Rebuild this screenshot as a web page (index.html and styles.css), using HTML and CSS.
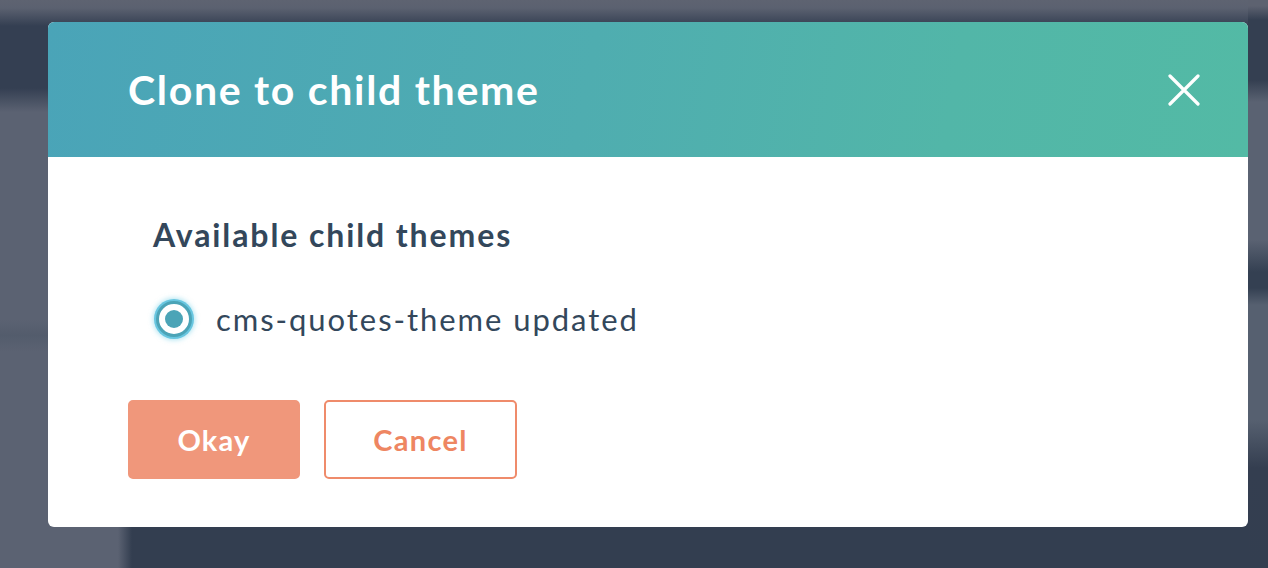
FILE: index.html
```html
<!DOCTYPE html>
<html lang="en">
<head>
<meta charset="utf-8">
<title>Clone to child theme</title>
<link rel="stylesheet" href="styles.css">
</head>
<body>
<div class="modal" role="dialog" aria-labelledby="modal-title">
  <header class="modal-header">
    <h1 class="modal-title" id="modal-title">Clone to child theme</h1>
    <button class="close-btn" type="button" aria-label="Close">
      <svg viewBox="0 0 32 32" width="32" height="32" aria-hidden="true">
        <path d="M2 2 L30 30 M30 2 L2 30" stroke="#fff" stroke-width="3.2" stroke-linecap="round" fill="none"/>
      </svg>
    </button>
  </header>
  <div class="modal-body">
    <fieldset class="field">
      <legend class="field-label">Available child themes</legend>
      <label class="radio-row">
        <span class="radio"><span class="radio-dot"></span></span>
        <span class="radio-text">cms-quotes-theme updated</span>
      </label>
    </fieldset>
    <div class="actions">
      <button class="btn btn-primary" type="button">Okay</button>
      <button class="btn btn-secondary" type="button">Cancel</button>
    </div>
  </div>
</div>
</body>
</html>
```
FILE: styles.css
```css
html, body {
  margin: 0;
  padding: 0;
}
body {
  width: 1268px;
  height: 568px;
  overflow: hidden;
  font-family: "Lato", "Open Sans", sans-serif;
  background-color: #5b6272;
  background-image:
    linear-gradient(to bottom, #5d6270 0, #5d6270 6px, #343f51 20px, #343f51 80px, #5a6272 102px, #5a6272 240px, #344052 272px, #344052 288px, #566070 305px, #566070 420px, #343e50 468px, #333e50 100%),
    linear-gradient(to right, #5b6272 0, #333e50 14px, #333e50 100%),
    linear-gradient(to bottom, #5e6371 0, #5b6170 8px, #343f52 26px, #343f52 88px, #5b6272 112px, #5b6272 320px, #535c6c 335px, #5b6272 352px, #5b6272 100%);
  background-repeat: no-repeat;
  background-size: 20px 100%, 1130px 128px, 100% 100%;
  background-position: right top, 118px 440px, left top;
  padding-top: 22px;
  box-sizing: border-box;
}

.modal {
  width: 1200px;
  height: 505px;
  margin-left: 48px;
  background: #fff;
  border-radius: 6px;
  overflow: hidden;
  display: flex;
  flex-direction: column;
}

.modal-header {
  height: 135px;
  flex: none;
  display: flex;
  align-items: center;
  justify-content: space-between;
  padding: 0 46px 0 80px;
  background: linear-gradient(100deg, #4aa4b8 0%, #4fadb0 45%, #52b6a8 75%, #53baa5 100%);
}

.modal-title {
  margin: 0;
  color: #fff;
  font-size: 41px;
  font-weight: 700;
  letter-spacing: 1.7px;
  line-height: 1;
}

.close-btn {
  width: 36px;
  height: 36px;
  padding: 0;
  border: 0;
  background: transparent;
  display: flex;
  align-items: center;
  justify-content: center;
  cursor: pointer;
}
.close-btn svg {
  width: 32px;
  height: 32px;
}

.modal-body {
  padding: 62px 80px 0 80px;
  display: flex;
  flex-direction: column;
}

.field {
  margin: 0;
  padding: 0 0 0 25px;
  border: 0;
}

.field-label {
  padding: 0;
  color: #33475b;
  font-size: 32px;
  font-weight: 700;
  letter-spacing: 1.9px;
  line-height: 1;
}

.radio-row {
  display: flex;
  align-items: center;
  gap: 24px;
  margin-top: 44px;
  height: 48px;
}

.radio {
  width: 36px;
  height: 36px;
  box-sizing: border-box;
  border-radius: 50%;
  border: 3px solid #4ba4b7;
  background: #fff;
  box-shadow: 0 0 0 2px #68c6e0, 0 0 5px 3px rgba(110, 205, 230, 0.55);
  display: flex;
  align-items: center;
  justify-content: center;
  flex: none;
  margin-left: 3px;
}
.radio-dot {
  width: 18px;
  height: 18px;
  border-radius: 50%;
  background: #4ba4b7;
}

.radio-text {
  color: #33475b;
  font-size: 31px;
  font-weight: 400;
  letter-spacing: 1.95px;
  line-height: 1;
}

.actions {
  display: flex;
  gap: 24px;
  margin-top: 57px;
}

.btn {
  height: 79px;
  box-sizing: border-box;
  border-radius: 5px;
  font-family: "Lato", "Open Sans", sans-serif;
  font-size: 29px;
  font-weight: 700;
  cursor: pointer;
}
.btn-primary {
  width: 172px;
  background: #f0977b;
  border: 2px solid #f0977b;
  color: #fff;
  letter-spacing: 1.2px;
}
.btn-secondary {
  width: 193px;
  background: #fff;
  border: 2px solid #ef8b6b;
  color: #ee8662;
  letter-spacing: 1.3px;
}
```
